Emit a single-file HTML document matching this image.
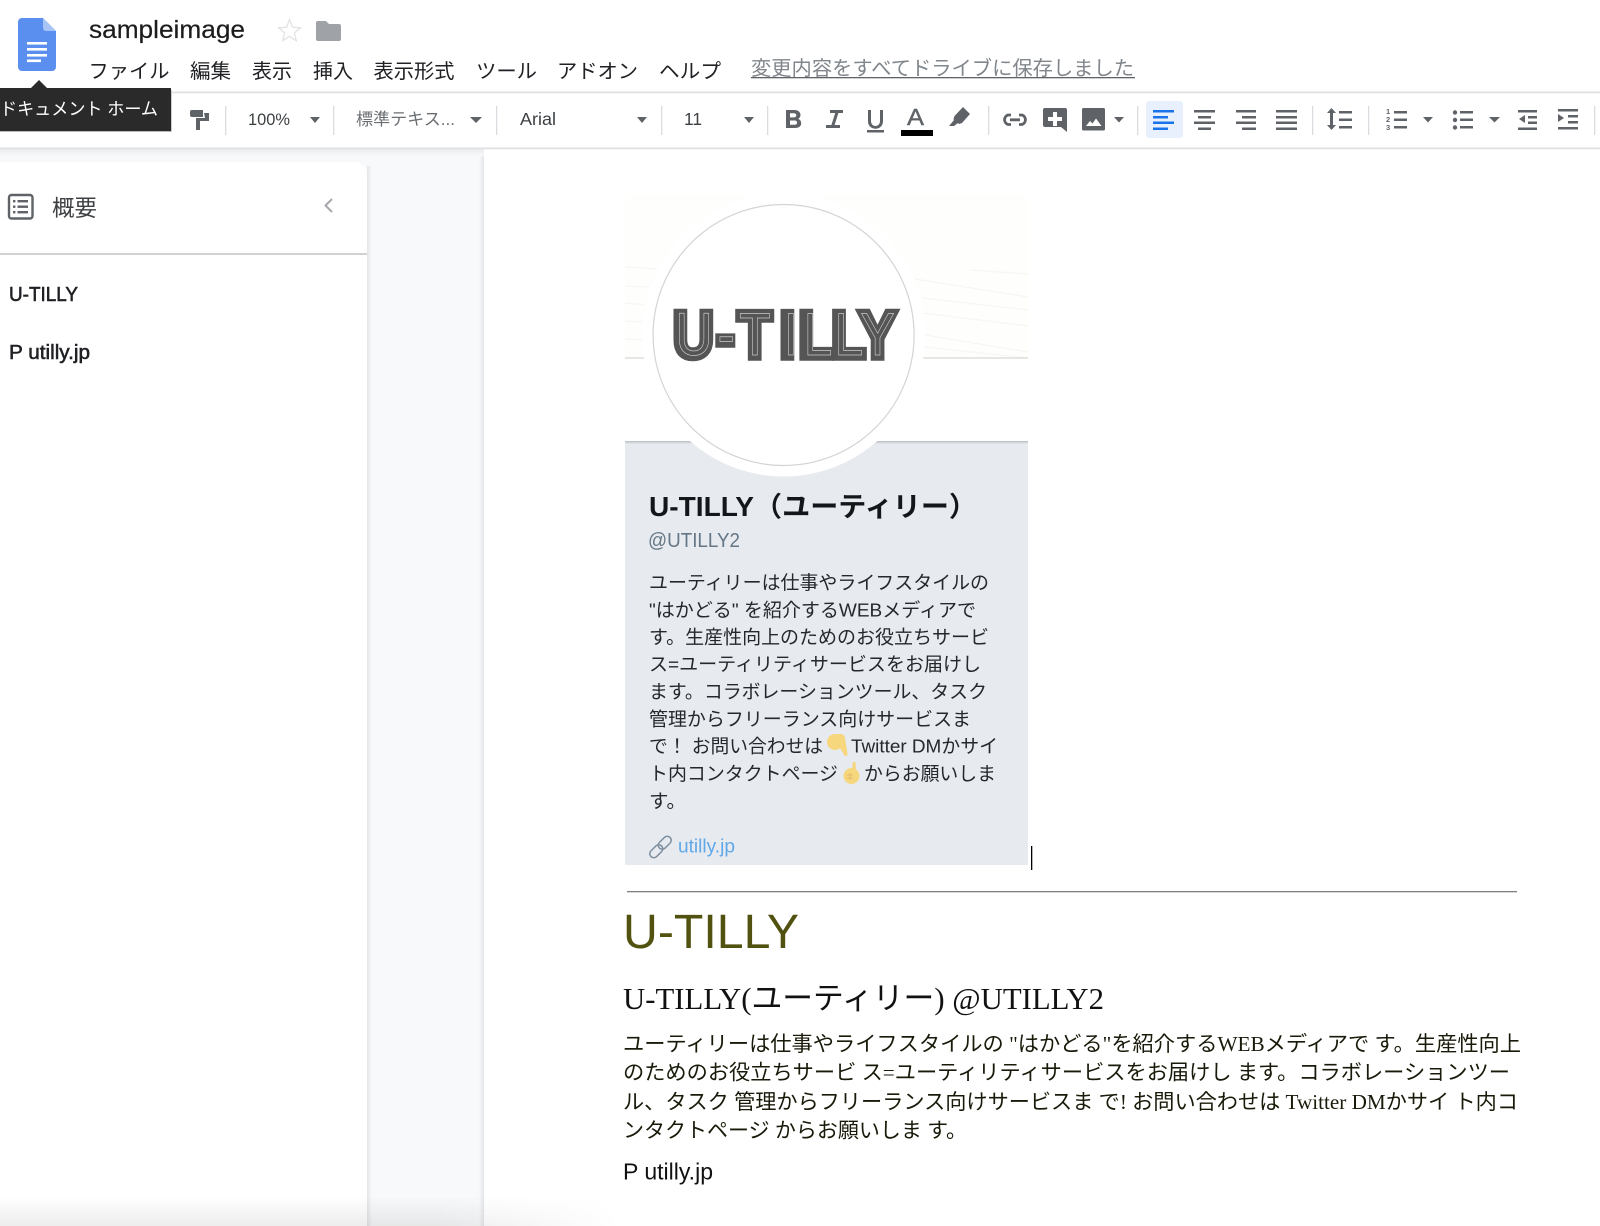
<!DOCTYPE html>
<html lang="ja"><head><meta charset="utf-8"><title>sampleimage</title>
<style>
html,body{margin:0;padding:0;background:#fff;width:1600px;height:1226px;overflow:hidden}
svg{display:block}
text{white-space:pre}
.s{font-family:"Liberation Sans","Noto Sans CJK JP",sans-serif}
.t{font-family:"Liberation Serif","Noto Sans CJK JP",serif}
.i{fill:#5f6368}
</style></head><body>
<svg width="1600" height="1226" viewBox="0 0 1600 1226" xmlns="http://www.w3.org/2000/svg">
<defs>
<linearGradient id="bot" x1="0" y1="0" x2="0" y2="1"><stop offset="0" stop-color="#000" stop-opacity="0"/><stop offset="1" stop-color="#000" stop-opacity=".07"/></linearGradient>
<linearGradient id="fade" x1="0" y1="0" x2="1" y2="0"><stop offset="0" stop-color="#fff"/><stop offset=".7" stop-color="#fff"/><stop offset="1" stop-color="#000"/></linearGradient>
<mask id="m"><rect x="0" y="1196" width="620" height="30" fill="url(#fade)"/></mask>
<linearGradient id="tb" x1="0" y1="0" x2="0" y2="1"><stop offset="0" stop-color="#ebecee"/><stop offset="1" stop-color="#f8f9fa"/></linearGradient>
<linearGradient id="sh" x1="0" y1="0" x2="0" y2="1"><stop offset="0" stop-color="#b9bdc2"/><stop offset="1" stop-color="#e7eaef"/></linearGradient>
<linearGradient id="sr" x1="0" y1="0" x2="1" y2="0"><stop offset="0" stop-color="#e4e5e8"/><stop offset="1" stop-color="#f8f9fa"/></linearGradient>
<linearGradient id="sl" x1="0" y1="0" x2="1" y2="0"><stop offset="0" stop-color="#f8f9fa"/><stop offset="1" stop-color="#e4e5e8"/></linearGradient>
</defs>

<!-- background -->
<rect x="0" y="148" width="1600" height="1078" fill="#f8f9fa"/>
<rect x="0" y="149" width="1600" height="7" fill="url(#tb)"/>
<rect x="484" y="149" width="1116" height="1077" fill="#fff"/>
<rect x="479" y="156" width="5" height="1070" fill="url(#sl)"/>
<rect x="367" y="166" width="5" height="1060" fill="url(#sr)"/>
<path d="M0 162H355a12 12 0 0 1 12 12V1226H0Z" fill="#fff"/>
<rect x="0" y="253" width="367" height="2" fill="#d2d2d2"/>

<!-- header -->
<path d="M22 18H43L56 31V67a4 4 0 0 1-4 4H22a4 4 0 0 1-4-4V22a4 4 0 0 1 4-4Z" fill="#5a8ff0"/>
<path d="M43 18L56 31H46a3 3 0 0 1-3-3Z" fill="#a8c5f8"/>
<g fill="#fff"><rect x="27" y="42" width="20" height="2.6"/><rect x="27" y="48" width="20" height="2.6"/><rect x="27" y="54" width="20" height="2.6"/><rect x="27" y="59.5" width="14" height="2.6"/></g>

<text class="s" x="89" y="38" font-size="25" fill="#1c1c1c" stroke="#1c1c1c" stroke-width=".2" textLength="156" lengthAdjust="spacingAndGlyphs">sampleimage</text>
<path d="M289.500 19.500l3 7.700 8 .6-6.100 5.100 1.900 7.800-6.800-4.300-6.800 4.300 1.900-7.800-6.100-5.100 8-.6z" fill="none" stroke="#e2e3e5" stroke-width="1.300"/>
<path d="M318 21h8l3 3h10a2 2 0 0 1 2 2v13a2 2 0 0 1-2 2H318a2 2 0 0 1-2-2V23a2 2 0 0 1 2-2Z" fill="#9fa2a6"/>

<g class="s" font-size="20" fill="#202124">
<text x="88.500" y="78" textLength="81" lengthAdjust="spacingAndGlyphs">ファイル</text>
<text x="190" y="78" textLength="41" lengthAdjust="spacingAndGlyphs">編集</text>
<text x="252" y="78" textLength="40" lengthAdjust="spacingAndGlyphs">表示</text>
<text x="313" y="78" textLength="40" lengthAdjust="spacingAndGlyphs">挿入</text>
<text x="373.500" y="78" textLength="81" lengthAdjust="spacingAndGlyphs">表示形式</text>
<text x="476" y="78" textLength="61" lengthAdjust="spacingAndGlyphs">ツール</text>
<text x="557" y="78" textLength="81" lengthAdjust="spacingAndGlyphs">アドオン</text>
<text x="659" y="78" textLength="62" lengthAdjust="spacingAndGlyphs">ヘルプ</text>
</g>
<text class="s" x="751" y="75" font-size="20" fill="#80868b" textLength="383" lengthAdjust="spacingAndGlyphs">変更内容をすべてドライブに保存しました</text>
<rect x="751" y="77" width="384" height="1.300" fill="#5f6368"/>

<!-- toolbar -->
<rect x="0" y="91.500" width="1600" height="1.800" fill="#dfe1e5"/>
<rect x="0" y="147.500" width="1600" height="1.800" fill="#dfe1e5"/>
<g fill="#dadce0">
<rect x="225" y="106" width="1.300" height="29"/><rect x="333" y="106" width="1.300" height="29"/><rect x="496" y="106" width="1.300" height="29"/><rect x="661" y="106" width="1.300" height="29"/><rect x="767" y="106" width="1.300" height="29"/><rect x="988" y="106" width="1.300" height="29"/><rect x="1137" y="106" width="1.300" height="29"/><rect x="1312" y="106" width="1.300" height="29"/><rect x="1368" y="106" width="1.300" height="29"/><rect x="1594" y="106" width="1.300" height="29"/>
</g>
<!-- paint roller -->
<path class="i" d="M190 112a2 2 0 0 1 2-2h11v7h-11a2 2 0 0 1-2-2ZM204 113h5v8h-9v9h-4v-12h9Z"/>
<text class="s" x="248" y="125" font-size="16.500" fill="#3c4043" textLength="42" lengthAdjust="spacingAndGlyphs">100%</text>
<text class="s" x="356" y="125" font-size="17" fill="#6b6f73" textLength="99" lengthAdjust="spacingAndGlyphs">標準テキス...</text>
<text class="s" x="520" y="125" font-size="17.500" fill="#3c4043" textLength="36" lengthAdjust="spacingAndGlyphs">Arial</text>
<text class="s" x="684" y="125" font-size="17.500" fill="#3c4043" textLength="18" lengthAdjust="spacingAndGlyphs">11</text>
<g class="i">
<path d="M310 117h10l-5 6Z"/><path d="M470 117h12l-6 6Z"/><path d="M637 117h10l-5 6Z"/><path d="M744 117h10l-5 6Z"/>
<path d="M1114 117h10l-5 5.500Z"/><path d="M1423 117h10l-5 5.500Z"/><path d="M1489 117h11l-5.500 5.500Z"/>
</g>
<!-- B I U A -->
<path d="M786 110h8.500c3.500 0 6 2 6 5 0 1.800-1 3.200-2.300 3.900 1.800.7 3 2.300 3 4.400 0 3-2.400 4.700-6 4.700H786Zm4 3.200v4.200h4c1.300 0 2.300-.9 2.300-2.100s-1-2.100-2.300-2.100Zm0 7.300v4.300h4.700c1.400 0 2.400-.9 2.400-2.200 0-1.200-1-2.100-2.400-2.100Z" class="i"/>
<path d="M830 110h13v3h-4.600l-3.800 12H840v3h-14v-3h5.400l3.800-12H830Z" class="i"/>
<path d="M868 110h3v11c0 3 2 5 4.500 5s4.500-2 4.500-5v-11h3v11c0 5-3.400 7.700-7.500 7.700S868 126 868 121Z" class="i"/><rect x="867" y="130" width="17" height="2.500" class="i"/>
<text class="s" x="907" y="125" font-size="23" fill="#5f6368" stroke="#5f6368" stroke-width=".4" textLength="17" lengthAdjust="spacingAndGlyphs">A</text>
<rect x="901" y="130" width="32" height="6" fill="#000"/>
<path class="i" d="M963 107l7 7-8 9-3 1-1-1-4 3h-5l5-6-.5-1 1-3Z"/>
<!-- link -->
<path d="M1011 115h-3a5 5 0 0 0 0 9.500h3M1019 115h3a5 5 0 0 1 0 9.500h-3M1010 119.800h10" fill="none" stroke="#5f6368" stroke-width="2.800"/>
<!-- comment -->
<path class="i" d="M1045 108h20a2 2 0 0 1 2 2v22l-6-5h-16a2 2 0 0 1-2-2V110a2 2 0 0 1 2-2Z"/>
<path d="M1053 112h4v5h5v4h-5v5h-4v-5h-5v-4h5Z" fill="#fff"/>
<!-- image -->
<rect x="1082" y="108" width="23" height="22.500" rx="1.500" class="i"/>
<path d="M1086 126l4-5 2.500 2.500 3.500-5 5.500 7.500Z" fill="#fff"/>
<!-- align -->
<rect x="1146" y="101" width="37" height="37" rx="3" fill="#e8f0fe"/>
<g fill="#1a73e8"><rect x="1153" y="110" width="21" height="2.500"/><rect x="1153" y="116" width="15" height="2.500"/><rect x="1153" y="121.500" width="21" height="2.500"/><rect x="1153" y="127.500" width="15" height="2.500"/></g>
<g class="i">
<rect x="1194" y="110" width="21" height="2.500"/><rect x="1198" y="116" width="13" height="2.500"/><rect x="1194" y="121.500" width="21" height="2.500"/><rect x="1198" y="127.500" width="13" height="2.500"/>
<rect x="1236" y="110" width="20" height="2.500"/><rect x="1242" y="116" width="14" height="2.500"/><rect x="1236" y="121.500" width="20" height="2.500"/><rect x="1242" y="127.500" width="14" height="2.500"/>
<rect x="1276" y="110" width="21" height="2.500"/><rect x="1276" y="116" width="21" height="2.500"/><rect x="1276" y="121.500" width="21" height="2.500"/><rect x="1276" y="127.500" width="21" height="2.500"/>
<!-- line spacing -->
<path d="M1331.500 108l4.500 5h-3v12h3l-4.500 5-4.500-5h3v-12h-3Z"/>
<rect x="1339" y="111" width="13" height="2.500"/><rect x="1339" y="118.500" width="13" height="2.500"/><rect x="1339" y="126" width="13" height="2.500"/>
<!-- numbered -->
<rect x="1394" y="111" width="13" height="2.500"/><rect x="1394" y="118.500" width="13" height="2.500"/><rect x="1394" y="126" width="13" height="2.500"/>
<!-- bullets -->
<circle cx="1455" cy="112.500" r="2.200"/><circle cx="1455" cy="120" r="2.200"/><circle cx="1455" cy="127.500" r="2.200"/>
<rect x="1460" y="111" width="13" height="2.500"/><rect x="1460" y="118.500" width="13" height="2.500"/><rect x="1460" y="126" width="13" height="2.500"/>
<!-- outdent -->
<rect x="1518" y="110" width="19" height="2.500"/><rect x="1528" y="116" width="9" height="2.500"/><rect x="1528" y="121.500" width="9" height="2.500"/><rect x="1518" y="127.500" width="19" height="2.500"/><path d="M1525 115v8l-6-4Z"/>
<!-- indent -->
<rect x="1558" y="109" width="20" height="2.500"/><rect x="1568" y="115" width="10" height="2.500"/><rect x="1568" y="121" width="10" height="2.500"/><rect x="1558" y="127" width="20" height="2.500"/><path d="M1558 114v8l6-4Z"/>
</g>
<g class="s" font-size="7.500" font-weight="bold" fill="#5f6368"><text x="1386" y="114">1</text><text x="1386" y="122">2</text><text x="1386" y="130">3</text></g>

<!-- tooltip -->
<path d="M39 80l8 8H31Z" fill="#2a2a2a"/>
<rect x="0" y="88" width="171" height="43" fill="#2a2a2a"/>
<rect x="0" y="131" width="172" height="1" fill="#bbb"/><rect x="171" y="90" width="1" height="42" fill="#ccc"/>
<text class="s" x="0" y="115" font-size="17.500" fill="#fff" textLength="158" lengthAdjust="spacingAndGlyphs">ドキュメント ホーム</text>

<!-- sidebar -->
<rect x="9" y="195" width="23.500" height="23.500" rx="2.500" fill="none" stroke="#5f6368" stroke-width="2.400"/>
<g fill="#5f6368"><rect x="13" y="200" width="2.400" height="2.400"/><rect x="13" y="205.500" width="2.400" height="2.400"/><rect x="13" y="211" width="2.400" height="2.400"/><rect x="17.500" y="200" width="10.500" height="2.400"/><rect x="17.500" y="205.500" width="10.500" height="2.400"/><rect x="17.500" y="211" width="10.500" height="2.400"/></g>
<text class="s" x="52" y="216" font-size="22.500" fill="#3c4043" textLength="45" lengthAdjust="spacingAndGlyphs">概要</text>
<path d="M332 199l-6.500 6.500 6.500 6.500" fill="none" stroke="#a5a8ac" stroke-width="2"/>
<text class="s" x="9" y="301" font-size="20" fill="#202124" stroke="#202124" stroke-width=".55" textLength="69" lengthAdjust="spacingAndGlyphs">U-TILLY</text>
<text class="s" x="9" y="359" font-size="20" fill="#202124" stroke="#202124" stroke-width=".55" textLength="81" lengthAdjust="spacingAndGlyphs">P utilly.jp</text>

<!-- card image -->
<rect x="625" y="195" width="403" height="163" fill="#fefefd"/>
<g fill="none" stroke="#f6f6f2" stroke-width="1.200">
<path d="M625 267l32 2M625 286l24 1M625 303l20 2M625 321l18 1M625 339l18 1"/>
<path d="M915 279l113 18M922 298l106 12M922 313l106 13M925 335l103 17M925 347l103 11M970 270l58 4"/>
</g>
<rect x="625" y="357.500" width="403" height="1" fill="#cfcfca"/>
<rect x="625" y="441" width="403" height="424" fill="#e7eaef"/>
<rect x="625" y="441" width="403" height="3" fill="url(#sh)"/>
<circle cx="783.600" cy="335" r="141.500" fill="#fff"/>
<circle cx="783.600" cy="335" r="130.500" fill="#fff" stroke="#d4d4d4" stroke-width="1.200"/>
<rect x="625" y="477" width="403" height="388" fill="#e7eaef"/>
<!-- logo -->
<g transform="translate(672 357.500) scale(.86 1)" font-family="Liberation Sans, sans-serif" font-size="66" font-weight="bold">
<text x="1 51 76 125 147 185 217" fill="#555" stroke="#555" stroke-width="6.500">U-TILLY</text>
</g>
<g transform="translate(672 355) scale(.86 1)" font-family="Liberation Sans, sans-serif" font-size="60">
<text x="4 53 78 130 153 189 219" fill="#555" stroke="#c9c9c9" stroke-width=".7">U-TILLY</text>
</g>

<!-- card text -->
<text class="s" x="649" y="516" font-size="27.500" font-weight="bold" fill="#14171a" textLength="328" lengthAdjust="spacingAndGlyphs">U-TILLY（ユーティリー）</text>
<text class="s" x="648" y="547" font-size="20" fill="#657786" textLength="92" lengthAdjust="spacingAndGlyphs">@UTILLY2</text>
<g class="s" font-size="18.800" fill="#25282b">
<text x="649" y="589" textLength="340" lengthAdjust="spacingAndGlyphs">ユーティリーは仕事やライフスタイルの</text>
<text x="649" y="616.300" textLength="327" lengthAdjust="spacingAndGlyphs">"はかどる" を紹介するWEBメディアで</text>
<text x="649" y="643.500" textLength="340" lengthAdjust="spacingAndGlyphs">す。生産性向上のためのお役立ちサービ</text>
<text x="649" y="670.700" textLength="332" lengthAdjust="spacingAndGlyphs">ス=ユーティリティサービスをお届けし</text>
<text x="649" y="698" textLength="338" lengthAdjust="spacingAndGlyphs">ます。コラボレーションツール、タスク</text>
<text x="649" y="725.300" textLength="322" lengthAdjust="spacingAndGlyphs">管理からフリーランス向けサービスま</text>
<text x="649" y="752.700" textLength="174" lengthAdjust="spacingAndGlyphs">で！ お問い合わせは</text>
<text x="851" y="752.700" textLength="147" lengthAdjust="spacingAndGlyphs">Twitter DMかサイ</text>
<text x="649" y="780" textLength="189" lengthAdjust="spacingAndGlyphs">ト内コンタクトページ</text>
<text x="864" y="780" textLength="132" lengthAdjust="spacingAndGlyphs">からお願いしま</text>
<text x="649" y="807.300" textLength="37" lengthAdjust="spacingAndGlyphs">す。</text>
</g>
<!-- emoji hands -->
<circle cx="835" cy="742" r="8" fill="#f6d77e"/>
<path d="M834 734h7c2 0 3.500 1.500 4 4l2.500 16a1.800 1.800 0 0 1-3.500.8L840 748l-6 1Z" fill="#f6d77e"/>
<circle cx="851.500" cy="776" r="8" fill="#f6d77e"/>
<path d="M852.500 763.500a1.600 1.600 0 0 1 3.200 0V775h-3.200Z" fill="#f6d77e"/>
<path d="M847 775h6M847 778h6M850 773v7" stroke="#dcb465" stroke-width=".7" fill="none"/>
<!-- link icon -->
<g fill="none" stroke="#7d8e9e" stroke-width="1.500" transform="rotate(-45 660.500 847)">
<rect x="647" y="843" width="15" height="8" rx="4"/><rect x="659" y="843" width="15" height="8" rx="4"/>
</g>
<text class="s" x="678" y="852.500" font-size="19" fill="#61a8e8" textLength="57" lengthAdjust="spacingAndGlyphs">utilly.jp</text>
<rect x="1031" y="846" width="1.300" height="24" fill="#000"/>

<!-- body -->
<rect x="627" y="891" width="890" height="1.300" fill="#808080"/>
<text class="s" x="623" y="948" font-size="48" fill="#525210" textLength="176" lengthAdjust="spacingAndGlyphs">U-TILLY</text>
<text class="t" x="623" y="1009" font-size="31" fill="#111" textLength="481" lengthAdjust="spacingAndGlyphs">U-TILLY(ユーティリー) @UTILLY2</text>
<g class="t" font-size="21" fill="#1a1a0a">
<text x="623" y="1051" textLength="898" lengthAdjust="spacingAndGlyphs">ユーティリーは仕事やライフスタイルの "はかどる"を紹介するWEBメディアで す。生産性向上</text>
<text x="623" y="1079.500" textLength="887" lengthAdjust="spacingAndGlyphs">のためのお役立ちサービ ス=ユーティリティサービスをお届けし ます。コラボレーションツー</text>
<text x="623" y="1109" textLength="895" lengthAdjust="spacingAndGlyphs">ル、タスク 管理からフリーランス向けサービスま で! お問い合わせは Twitter DMかサイ ト内コ</text>
<text x="623" y="1137.500" textLength="344" lengthAdjust="spacingAndGlyphs">ンタクトページ からお願いしま す。</text>
</g>
<text class="s" x="623" y="1179.500" font-size="23.500" fill="#111" textLength="90" lengthAdjust="spacingAndGlyphs">P utilly.jp</text>

<!-- bottom shade -->
<rect x="0" y="1196" width="620" height="30" fill="url(#bot)" mask="url(#m)"/>
</svg>
</body></html>
